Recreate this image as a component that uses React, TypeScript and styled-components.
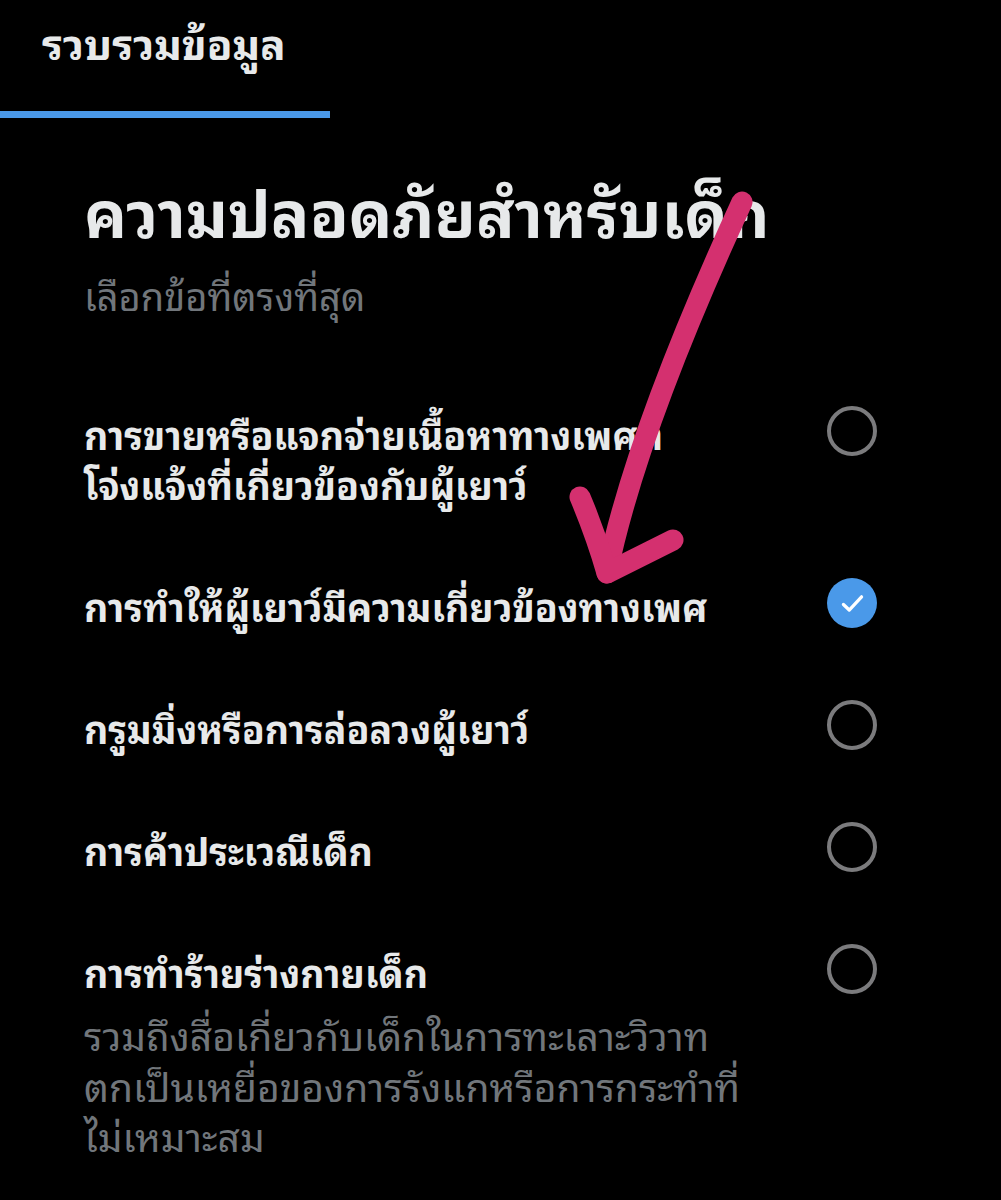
import React from 'react';
import styled, { createGlobalStyle } from 'styled-components';

const GlobalStyle = createGlobalStyle`
  html, body {
    margin: 0;
    padding: 0;
    background: #000;
  }
  body {
    font-family: "Noto Sans Thai Looped", "Noto Sans Thai", "Noto Sans", sans-serif;
    color: #e7e9ea;
  }
`;

const Page = styled.div`
  position: relative;
  width: 1001px;
  min-height: 1200px;
  background: #000;
  overflow: hidden;
`;

const TabBar = styled.div`
  display: flex;
`;

const Tab = styled.div`
  width: 330px;
  height: 118px;
  box-sizing: border-box;
  padding: 11px 0 0 42px;
  border-bottom: 7px solid #4a99e9;
  font-size: 42px;
  font-weight: 700;
  line-height: 60px;
  color: #e7e9ea;
`;

const Content = styled.div`
  padding: 46px 124px 0 84px;
`;

const Title = styled.h1`
  margin: 0;
  font-size: 64px;
  font-weight: 700;
  line-height: 90px;
  white-space: nowrap;
  color: #e7e9ea;
`;

const Subtitle = styled.p`
  margin: 12px 0 0;
  font-size: 38px;
  line-height: 56px;
  color: #71767b;
`;

const List = styled.div`
  display: flex;
  flex-direction: column;
  margin-top: 86px;
`;

const Row = styled.div`
  display: flex;
  justify-content: space-between;
  align-items: flex-start;
  padding: 35px 0 37px;
  &:first-child {
    padding-top: 0;
  }
`;

const RowText = styled.div`
  display: flex;
  flex-direction: column;
`;

const Label = styled.div`
  font-size: 37.5px;
  font-weight: 700;
  line-height: 50px;
  white-space: nowrap;
  color: #e7e9ea;
`;

const Description = styled.p`
  margin: 13px 0 0;
  font-size: 39px;
  line-height: 50.5px;
  white-space: nowrap;
  color: #71767b;
`;

const Radio = styled.div<{ $checked?: boolean }>`
  flex: none;
  margin-top: -2px;
  width: 50px;
  height: 50px;
  box-sizing: border-box;
  border-radius: 50%;
  border: ${({ $checked }) => ($checked ? 'none' : '4px solid #7b7b7d')};
  background: ${({ $checked }) => ($checked ? '#4a99e9' : 'transparent')};
  display: flex;
  align-items: center;
  justify-content: center;
`;

const Overlay = styled.svg`
  position: absolute;
  left: 0;
  top: 0;
  pointer-events: none;
`;

type Option = {
  lines: string[];
  checked?: boolean;
  desc?: string[];
};

const options: Option[] = [
  { lines: ['การขายหรือแจกจ่ายเนื้อหาทางเพศที่', 'โจ่งแจ้งที่เกี่ยวข้องกับผู้เยาว์'] },
  { lines: ['การทำให้ผู้เยาว์มีความเกี่ยวข้องทางเพศ'], checked: true },
  { lines: ['กรูมมิ่งหรือการล่อลวงผู้เยาว์'] },
  { lines: ['การค้าประเวณีเด็ก'] },
  {
    lines: ['การทำร้ายร่างกายเด็ก'],
    desc: [
      'รวมถึงสื่อเกี่ยวกับเด็กในการทะเลาะวิวาท',
      'ตกเป็นเหยื่อของการรังแกหรือการกระทำที่',
      'ไม่เหมาะสม',
    ],
  },
];

// join lines with <br /> so a wrapped label stays one text block
function Lines({ items }: { items: string[] }) {
  return (
    <>
      {items.map((t, i) => (
        <React.Fragment key={t}>
          {i > 0 && <br />}
          {t}
        </React.Fragment>
      ))}
    </>
  );
}

function Check() {
  return (
    <svg width="29" height="29" viewBox="0 0 24 24">
      <path d="M4.5 12.8l4.8 4.6L19.5 6.5" fill="none" stroke="#fff" strokeWidth="2.7" strokeLinecap="round" strokeLinejoin="round" />
    </svg>
  );
}

export default function App() {
  return (
    <>
      <GlobalStyle />
      <Page>
        <TabBar>
          <Tab>รวบรวมข้อมูล</Tab>
        </TabBar>
        <Content>
          <Title>ความปลอดภัยสำหรับเด็ก</Title>
          <Subtitle>เลือกข้อที่ตรงที่สุด</Subtitle>
          <List>
            {options.map((o, i) => (
              <Row key={i}>
                <RowText>
                  <Label>
                    <Lines items={o.lines} />
                  </Label>
                  {o.desc && (
                    <Description>
                      <Lines items={o.desc} />
                    </Description>
                  )}
                </RowText>
                <Radio $checked={o.checked}>{o.checked && <Check />}</Radio>
              </Row>
            ))}
          </List>
        </Content>
        <Overlay width="1001" height="1200" viewBox="0 0 1001 1200">
          <g fill="none" stroke="#d4306f" strokeWidth="21" strokeLinecap="round" strokeLinejoin="round">
            <path d="M742 202 Q636 432 607 573" />
            <path d="M580 497 Q596 535 607 573 L673 540" />
          </g>
        </Overlay>
      </Page>
    </>
  );
}
